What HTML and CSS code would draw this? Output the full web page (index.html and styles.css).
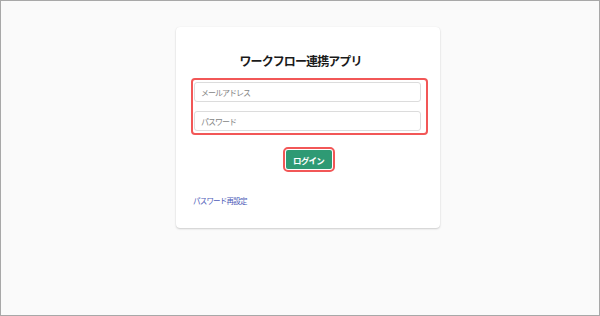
FILE: index.html
```html
<!DOCTYPE html>
<html lang="ja">
<head>
<meta charset="utf-8">
<link rel="stylesheet" href="styles.css">
</head>
<body>
<div class="frame">
  <div class="card">
    <h1 class="title">ワークフロー連携アプリ</h1>
    <div class="fields">
      <input class="field" type="text" placeholder="メールアドレス">
      <input class="field" type="password" placeholder="パスワード">
    </div>
    <div class="actions">
      <button class="login">ログイン</button>
    </div>
    <a class="reset" href="#">パスワード再設定</a>
  </div>
</div>
</body>
</html>
```
FILE: styles.css
```css
html, body {
  margin: 0;
  padding: 0;
}
body {
  font-family: "Noto Sans CJK JP", "Noto Sans", sans-serif;
  background: #fafafa;
}
.frame {
  box-sizing: border-box;
  width: 600px;
  height: 316px;
  border: 1px solid #a8a8a8;
  background: #fafafa;
  padding: 26px 0 0 175px;
}
.card {
  box-sizing: border-box;
  width: 264px;
  height: 201px;
  background: #fff;
  border-radius: 4px;
  box-shadow: 0 1px 2px rgba(0,0,0,0.18), 0 0 1px rgba(0,0,0,0.08);
  padding: 23px 12px 0 15px;
}
.title {
  margin: 0 0 6px 0;
  padding-right: 18px;
  text-align: center;
  font-size: 12px;
  letter-spacing: -0.9px;
  line-height: 22px;
  font-weight: bold;
  color: #1a1a1a;
}
.fields {
  box-sizing: border-box;
  width: 237px;
  border: 2px solid #f25757;
  border-radius: 4px;
  padding: 2px 5px 2px 1px;
  display: flex;
  flex-direction: column;
  gap: 9px;
}
.field {
  box-sizing: border-box;
  height: 20px;
  width: 100%;
  margin: 0;
  border: 1px solid #dcdcdc;
  border-radius: 3px;
  padding: 0 6px;
  font-family: "Noto Sans CJK JP", sans-serif;
  font-size: 8px;
  letter-spacing: -1px;
  color: #333;
  background: #fff;
}
.field::placeholder {
  color: #858585;
}
.actions {
  display: flex;
  justify-content: center;
  padding: 15px 0 0 0;
  width: 237px;
  margin-left: -1px;
}
.login {
  box-sizing: border-box;
  width: 46px;
  height: 19px;
  border: none;
  border-radius: 2px;
  background: #2e9a74;
  color: #fff;
  font-family: "Noto Sans CJK JP", sans-serif;
  font-size: 8.5px;
  letter-spacing: -0.7px;
  font-weight: bold;
  padding: 0;
  outline: 2px solid #f25757;
  outline-offset: 1px;
}
.reset {
  display: inline-block;
  margin: 26px 0 0 2px;
  font-size: 7.5px;
  letter-spacing: -0.8px;
  line-height: 12px;
  color: #4e5bb8;
  text-decoration: none;
}
```
